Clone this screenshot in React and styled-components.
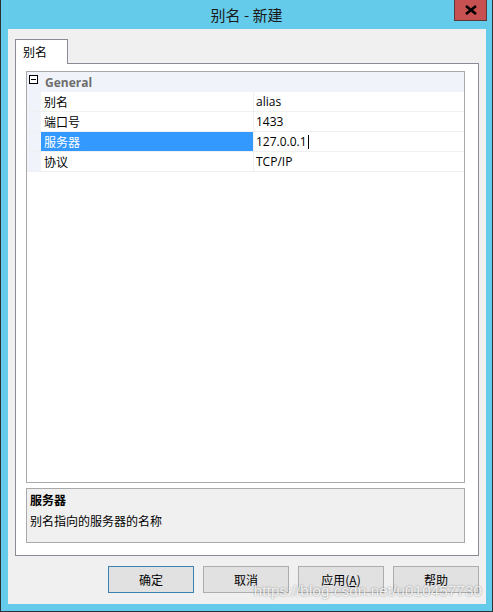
import React from "react";
import styled, { createGlobalStyle } from "styled-components";

const GlobalStyle = createGlobalStyle`
	html, body {
		margin: 0;
		padding: 0;
		background: #65cbea;
	}
	body {
		font-family: "Noto Sans", "Noto Sans CJK SC", sans-serif;
		font-size: 12px;
		color: #000;
	}
`;

const rows = [
	{ name: "别名", value: "alias" },
	{ name: "端口号", value: "1433" },
	{ name: "服务器", value: "127.0.0.1", selected: true },
	{ name: "协议", value: "TCP/IP" },
];

const buttons = [
	{ label: "确定", primary: true },
	{ label: "取消" },
	{ label: "应用", key: "A" },
	{ label: "帮助" },
];

function App() {
	return (
		<Window>
			<GlobalStyle />
			<TitleBar>
				<Title>别名 - 新建</Title>
				<CloseBtn>
					<svg width="12" height="10" viewBox="0 0 12 10">
						<path d="M1 1 L11 9 M11 1 L1 9" stroke="#000" strokeWidth="2.6" />
					</svg>
				</CloseBtn>
			</TitleBar>
			<Frame>
				<Client>
					<TabStrip>
						<Tab>别名</Tab>
						<TabLine />
					</TabStrip>
					<Page>
						<Grid>
							<HeaderRow>
								<Gutter>
									<Toggle>
										<span />
									</Toggle>
								</Gutter>
								<HeaderText>General</HeaderText>
							</HeaderRow>
							{rows.map((r, i) => (
								<Row key={i}>
									<Gutter />
									<NameCell selected={r.selected}>{r.name}</NameCell>
									<ValueCell>
										{r.value}
										{r.selected && <Caret />}
									</ValueCell>
								</Row>
							))}
							<Filler />
						</Grid>
						<Desc>
							<DescTitle>服务器</DescTitle>
							<DescText>别名指向的服务器的名称</DescText>
						</Desc>
					</Page>
					<BtnBar>
						{buttons.map((b, i) => (
							<Btn key={i} primary={b.primary}>
								{b.label}
								{b.key && (
									<>
										(<u>{b.key}</u>)
									</>
								)}
							</Btn>
						))}
					</BtnBar>
				</Client>
			</Frame>
			<Watermark>https://blog.csdn.net/u010457730</Watermark>
		</Window>
	);
}

export default App;

const Window = styled.div`
	position: relative;
	width: 493px;
	height: 612px;
	box-sizing: border-box;
	border-left: 1px solid #2b3236;
	border-right: 1px solid #2b3236;
	border-bottom: 1px solid #2b3236;
	background: #65cbea;
	display: flex;
	flex-direction: column;
`;

const TitleBar = styled.div`
	position: relative;
	height: 30px;
	display: flex;
	align-items: center;
	justify-content: center;
`;

const Title = styled.div`
	font-family: "Noto Sans CJK SC", sans-serif;
	font-size: 15px;
	color: #1a1a1a;
	margin-top: -1px;
`;

const CloseBtn = styled.div`
	position: absolute;
	top: 0;
	right: 5px;
	width: 33px;
	height: 21px;
	box-sizing: border-box;
	background: #c75050;
	border: 1px solid #5a3a3a;
	border-top: none;
	display: flex;
	align-items: center;
	justify-content: center;
`;

const Frame = styled.div`
	padding: 0 6px 7px 7px;
	flex: 1;
	display: flex;
`;

const Client = styled.div`
	flex: 1;
	background: #f0f0f0;
	display: flex;
	flex-direction: column;
	padding: 10px 7px 11px 7px;
`;

const TabStrip = styled.div`
	display: flex;
	align-items: flex-end;
	height: 25px;
	margin-bottom: -1px;
	position: relative;
	z-index: 1;
`;

const Tab = styled.div`
	width: 53px;
	height: 25px;
	box-sizing: border-box;
	border: 1px solid #898c95;
	border-bottom: none;
	background: #fff;
	font-family: "Noto Sans CJK SC", sans-serif;
	font-size: 12px;
	padding: 3px 0 0 7px;
`;

const TabLine = styled.div`
	flex: 1;
	height: 1px;
	background: #898c95;
`;

const Page = styled.div`
	height: 493px;
	box-sizing: border-box;
	border: 1px solid #898c95;
	border-top: none;
	background: #fff;
	padding: 8px 13px 12px 10px;
	display: flex;
	flex-direction: column;
	gap: 5px;
`;

const Grid = styled.div`
	flex: 1;
	border: 1px solid #a9a9a9;
	display: flex;
	flex-direction: column;
`;

const HeaderRow = styled.div`
	display: flex;
	height: 20px;
	background: #f0f4fa;
	align-items: center;
`;

const Gutter = styled.div`
	width: 14px;
	align-self: stretch;
	background: #f0f4fa;
	position: relative;
`;

const Toggle = styled.div`
	position: absolute;
	left: 2px;
	top: 3px;
	width: 9px;
	height: 9px;
	box-sizing: border-box;
	border: 1px solid #000;
	background: #fff;
	span {
		position: absolute;
		left: 1px;
		top: 3px;
		width: 5px;
		height: 1px;
		background: #000;
	}
`;

const HeaderText = styled.div`
	font-weight: bold;
	color: #6d6d6d;
	padding-left: 4px;
	font-family: "Open Sans", "Noto Sans", sans-serif;
	font-size: 12px;
`;

const Row = styled.div`
	display: flex;
	height: 20px;
	border-bottom: 1px solid #f0f0f0;
	box-sizing: border-box;
	font-family: "Noto Sans CJK SC", sans-serif;
	font-size: 12px;
`;

const NameCell = styled.div`
	width: 209px;
	padding-left: 3px;
	display: flex;
	align-items: center;
	background: ${(p) => (p.selected ? "#3399ff" : "#fff")};
	color: ${(p) => (p.selected ? "#fff" : "#000")};
	border-right: 1px solid #f0f0f0;
`;

const ValueCell = styled.div`
	flex: 1;
	display: flex;
	align-items: center;
	padding-left: 2px;
	font-family: "Open Sans", "Noto Sans", sans-serif;
`;

const Caret = styled.span`
	display: inline-block;
	width: 1px;
	height: 14px;
	background: #000;
	margin-left: 1px;
`;

const Filler = styled.div`
	flex: 1;
`;

const Desc = styled.div`
	height: 55px;
	box-sizing: border-box;
	border: 1px solid #a9a9a9;
	background: #f0f0f0;
	padding: 2px 0 0 3px;
	font-family: "Noto Sans CJK SC", sans-serif;
	font-size: 12px;
`;

const DescTitle = styled.div`
	font-weight: bold;
	line-height: 18px;
`;

const DescText = styled.div`
	line-height: 18px;
	margin-top: 3px;
`;

const BtnBar = styled.div`
	display: flex;
	justify-content: flex-end;
	gap: 9px;
	margin-top: 10px;
`;

const Btn = styled.div`
	width: 86px;
	height: 27px;
	box-sizing: border-box;
	border: 1px solid ${(p) => (p.primary ? "#3c7fb1" : "#adadad")};
	background: #e1e1e1;
	display: flex;
	align-items: center;
	justify-content: center;
	font-family: "Noto Sans CJK SC", sans-serif;
	font-size: 12px;
	color: #000;
`;

const Watermark = styled.div`
	position: absolute;
	right: 10px;
	bottom: 12px;
	font-family: "Liberation Sans", sans-serif;
	font-size: 15px;
	color: rgba(255, 255, 255, 0.85);
	text-shadow: 0 0 2px rgba(0, 0, 0, 0.45);
	letter-spacing: 0.2px;
	pointer-events: none;
`;
